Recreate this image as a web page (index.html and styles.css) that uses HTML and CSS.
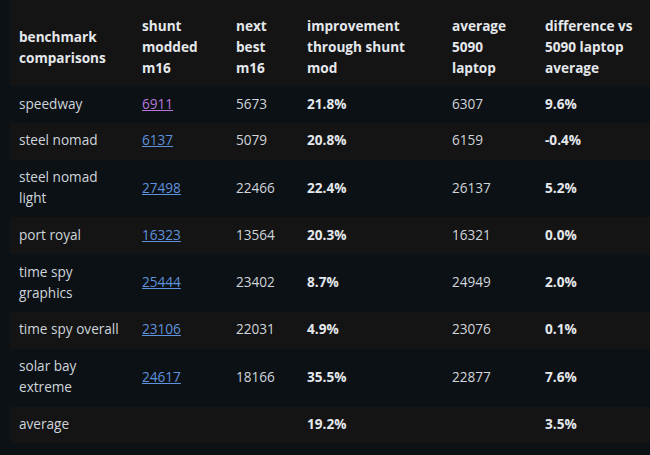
FILE: index.html
```html
<!DOCTYPE html>
<html lang="en">
<head>
<meta charset="utf-8">
<title>benchmark comparisons</title>
<link rel="stylesheet" href="styles.css">
</head>
<body>
<table class="bench">
  <colgroup>
    <col class="c1"><col class="c2"><col class="c3"><col class="c4"><col class="c5"><col class="c6">
  </colgroup>
  <thead>
    <tr>
      <th>benchmark comparisons</th>
      <th>shunt modded m16</th>
      <th>next best m16</th>
      <th>improvement through shunt mod</th>
      <th>average 5090 laptop</th>
      <th>difference vs 5090 laptop average</th>
    </tr>
  </thead>
  <tbody>
    <tr><td>speedway</td><td><a class="visited" href="#">6911</a></td><td>5673</td><td class="b">21.8%</td><td>6307</td><td class="b">9.6%</td></tr>
    <tr><td>steel nomad</td><td><a href="#">6137</a></td><td>5079</td><td class="b">20.8%</td><td>6159</td><td class="b">-0.4%</td></tr>
    <tr><td>steel nomad light</td><td><a href="#">27498</a></td><td>22466</td><td class="b">22.4%</td><td>26137</td><td class="b">5.2%</td></tr>
    <tr><td>port royal</td><td><a href="#">16323</a></td><td>13564</td><td class="b">20.3%</td><td>16321</td><td class="b">0.0%</td></tr>
    <tr><td>time spy graphics</td><td><a href="#">25444</a></td><td>23402</td><td class="b">8.7%</td><td>24949</td><td class="b">2.0%</td></tr>
    <tr><td>time spy overall</td><td><a href="#">23106</a></td><td>22031</td><td class="b">4.9%</td><td>23076</td><td class="b">0.1%</td></tr>
    <tr><td>solar bay extreme</td><td><a href="#">24617</a></td><td>18166</td><td class="b">35.5%</td><td>22877</td><td class="b">7.6%</td></tr>
    <tr><td>average</td><td></td><td></td><td class="b">19.2%</td><td></td><td class="b">3.5%</td></tr>
  </tbody>
</table>
</body>
</html>
```
FILE: styles.css
```css
html, body {
  margin: 0;
  padding: 0;
  background: #0c1115;
}
body {
  padding-left: 10px;
  font-family: "Open Sans", "Noto Sans", sans-serif;
  font-size: 13.6px;
  line-height: 21px;
  color: #cfd5db;
}
.bench {
  border-collapse: collapse;
  table-layout: fixed;
  width: 640px;
}
.c1 { width: 123px; }
.c2 { width: 94px; }
.c3 { width: 71px; }
.c4 { width: 145px; }
.c5 { width: 93px; }
.c6 { width: 114px; }
.bench th {
  text-align: left;
  font-weight: 700;
  color: #e4e8ec;
  vertical-align: middle;
  padding: 15px 12px 8px 9px;
}
.bench td {
  vertical-align: middle;
  padding: 6.5px 8px 9.3px 9px;
}
.bench thead tr,
.bench tbody tr:nth-child(2n) {
  background: #141414;
}
.bench tbody tr:nth-child(2n+1) {
  background: #0c1115;
}
.bench .b {
  font-weight: 700;
  color: #e4e8ec;
}
.bench a {
  color: #5f92dc;
  text-decoration: underline;
}
.bench a.visited {
  color: #b878d8;
}
```
